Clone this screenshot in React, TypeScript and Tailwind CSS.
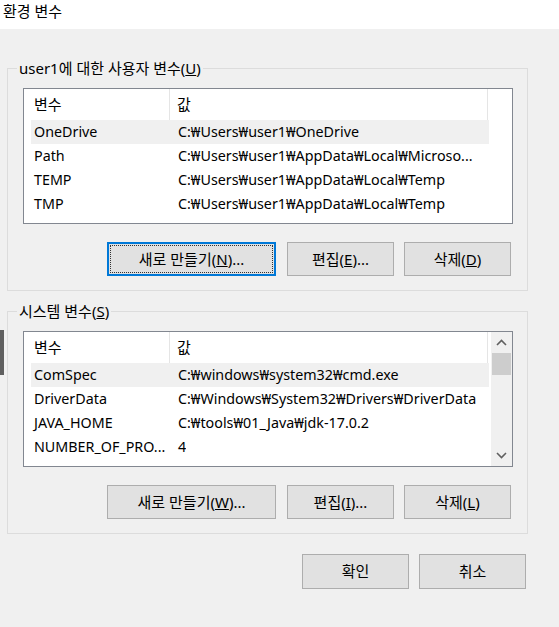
import React from "react";

type Row = { name: string; value: string; selected?: boolean };

const userRows: Row[] = [
  { name: "OneDrive", value: "C:₩Users₩user1₩OneDrive", selected: true },
  { name: "Path", value: "C:₩Users₩user1₩AppData₩Local₩Microso..." },
  { name: "TEMP", value: "C:₩Users₩user1₩AppData₩Local₩Temp" },
  { name: "TMP", value: "C:₩Users₩user1₩AppData₩Local₩Temp" },
];

const sysRows: Row[] = [
  { name: "ComSpec", value: "C:₩windows₩system32₩cmd.exe", selected: true },
  { name: "DriverData", value: "C:₩Windows₩System32₩Drivers₩DriverData" },
  { name: "JAVA_HOME", value: "C:₩tools₩01_Java₩jdk-17.0.2" },
  { name: "NUMBER_OF_PRO...", value: "4" },
];

function Header({ width }: { width: number }) {
  return (
    <div className="flex h-[31px] shrink-0 bg-white">
      <div className="w-[146px] h-full pl-[10px] leading-[31px] border-r border-[#e5e5e5]">변수</div>
      <div className="h-full pl-[7px] leading-[31px] border-r border-[#e5e5e5]" style={{ width }}>
        값
      </div>
    </div>
  );
}

function Rows({ rows, width }: { rows: Row[]; width: number }) {
  return (
    <div className="flex flex-col ml-[7px] text-[14.3px]">
      {rows.map((r) => (
        <div
          key={r.name}
          className={`flex h-[24px] leading-[24px] whitespace-nowrap ${r.selected ? "bg-[#f0f0f0]" : ""}`}
          style={{ width }}
        >
          <div className="w-[139px] shrink-0 pl-[3px] overflow-hidden">{r.name}</div>
          <div className="pl-[8px] overflow-hidden">{r.value}</div>
        </div>
      ))}
    </div>
  );
}

function Chevron({ up }: { up?: boolean }) {
  return (
    <svg width="11" height="7" viewBox="0 0 11 7">
      <path
        d={up ? "M1 6 L5.5 1.5 L10 6" : "M1 1 L5.5 5.5 L10 1"}
        fill="none"
        stroke="#606060"
        strokeWidth="1.6"
      />
    </svg>
  );
}

function Btn({
  children,
  w,
  tall,
  focused,
}: {
  children: React.ReactNode;
  w: string;
  tall?: boolean;
  focused?: boolean;
}) {
  if (focused) {
    return (
      <div className={`${w} h-[34px] bg-[#e1e1e1] border-2 border-[#0078d7] p-[1px] flex`}>
        <div className="flex-1 border border-dotted border-[#333] flex items-center justify-center">
          <span className="whitespace-nowrap">{children}</span>
        </div>
      </div>
    );
  }
  return (
    <div
      className={`${w} ${tall ? "h-[35px]" : "h-[34px]"} bg-[#e1e1e1] border border-[#adadad] flex items-center justify-center`}
    >
      <span className="whitespace-nowrap">{children}</span>
    </div>
  );
}

export default function App() {
  return (
    <div className="relative w-[559px] h-[627px] overflow-hidden flex flex-col bg-[#f0f0f0] text-[15px] text-black font-['Noto_Sans','Noto_Sans_CJK_KR',sans-serif]">
      <div className="h-[29px] shrink-0 bg-white pl-[3px] pt-[1px] leading-[20px]">환경 변수</div>

      <div className="flex flex-col pl-[7px]">
        <fieldset className="mt-[29px] w-[521px] border border-[#dcdcdc] pt-[10px] pb-[14px] px-0 m-0 min-w-0">
          <legend className="ml-[9px] px-[2px] leading-[20px]">
            user1에 대한 사용자 변수(<u>U</u>)
          </legend>
          <div className="ml-[15px] w-[490px] h-[136px] border border-[#828790] bg-white overflow-hidden">
            <Header width={318} />
            <Rows rows={userRows} width={458} />
          </div>
          <div className="mt-[18px] flex justify-end pr-[16px] gap-[11px]">
            <Btn w="w-[169px]" focused>
              새로 만들기(<u>N</u>)...
            </Btn>
            <div className="flex gap-[10px]">
              <Btn w="w-[107px]">
                편집(<u>E</u>)...
              </Btn>
              <Btn w="w-[107px]">
                삭제(<u>D</u>)
              </Btn>
            </div>
          </div>
        </fieldset>

        <fieldset className="mt-[10px] w-[521px] border border-[#dcdcdc] pt-[10px] pb-[14px] px-0 m-0 min-w-0">
          <legend className="ml-[9px] px-[2px] leading-[20px]">
            시스템 변수(<u>S</u>)
          </legend>
          <div className="ml-[15px] w-[490px] h-[136px] border border-[#828790] bg-white overflow-hidden flex">
            <div className="w-[467px] flex flex-col overflow-hidden">
              <Header width={318} />
              <Rows rows={sysRows} width={458} />
            </div>
            <div className="w-[21px] h-full bg-[#f0f0f0] flex flex-col">
              <div className="h-[21px] flex items-center justify-center">
                <Chevron up />
              </div>
              <div className="mx-[1px] h-[22px] bg-[#cdcdcd]" />
              <div className="flex-1" />
              <div className="h-[21px] flex items-center justify-center">
                <Chevron />
              </div>
            </div>
          </div>
          <div className="mt-[18px] flex justify-end pr-[16px] gap-[11px]">
            <Btn w="w-[169px]">
              새로 만들기(<u>W</u>)...
            </Btn>
            <div className="flex gap-[10px]">
              <Btn w="w-[107px]">
                편집(<u>I</u>)...
              </Btn>
              <Btn w="w-[107px]">
                삭제(<u>L</u>)
              </Btn>
            </div>
          </div>
        </fieldset>

        <div className="mt-[20px] w-[521px] flex justify-end pr-[2px] gap-[10px]">
          <Btn w="w-[107px]" tall>
            확인
          </Btn>
          <Btn w="w-[107px]" tall>
            취소
          </Btn>
        </div>
      </div>

      <div className="absolute left-0 top-[330px] w-[4px] h-[45px] bg-[#5f5f5f]" />
    </div>
  );
}
